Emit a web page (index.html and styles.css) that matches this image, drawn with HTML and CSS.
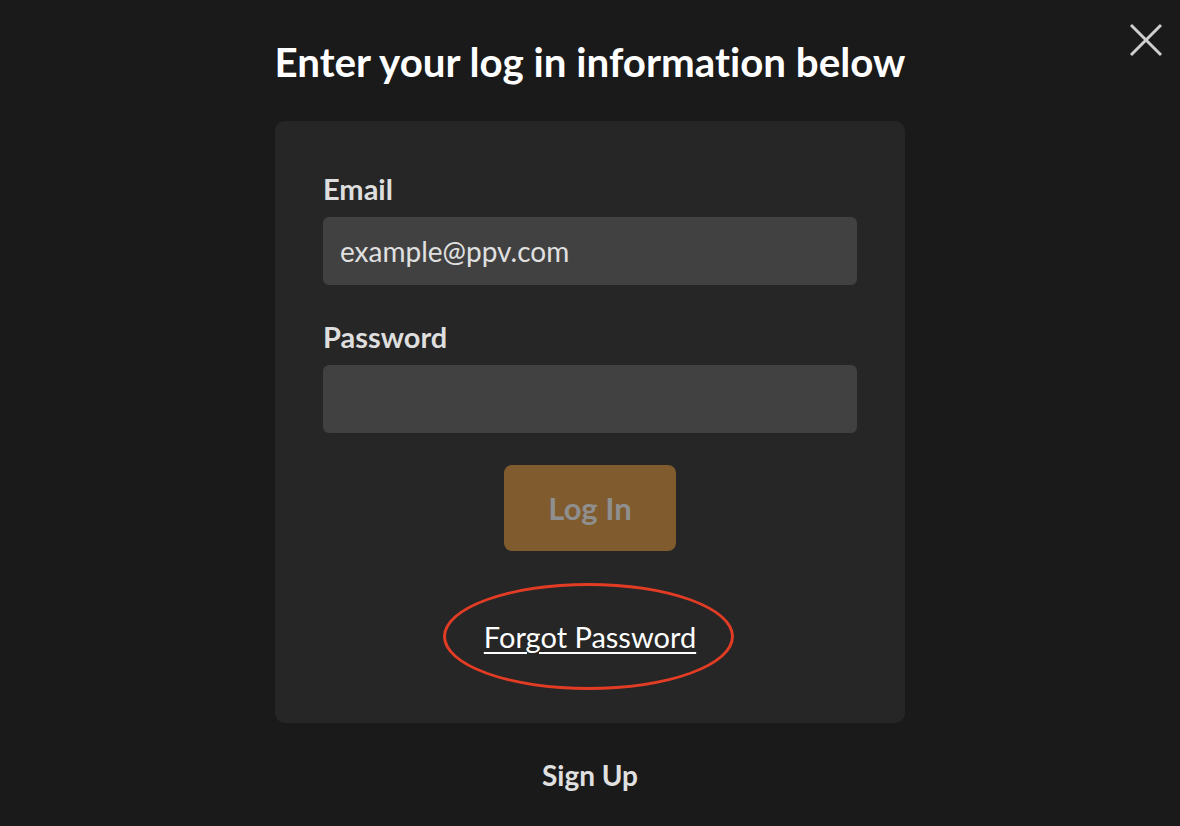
FILE: index.html
```html
<!DOCTYPE html>
<html lang="en">
<head>
  <meta charset="UTF-8" />
  <meta name="viewport" content="width=device-width, initial-scale=1.0"/>
  <title>Log In</title>
  <link rel="stylesheet" href="styles.css">
</head>
<body>

<button class="close" type="button" aria-label="Close">
  <svg width="36" height="36" viewBox="0 0 36 36">
    <path d="M3 3 L33 33 M33 3 L3 33" stroke="#cfcfcf" stroke-width="3" fill="none"/>
  </svg>
</button>

<main class="modal">
  <h2 class="title">Enter your log in information below</h2>

  <form class="card" id="loginForm">
    <label class="label" for="email">Email</label>
    <input class="field" type="email" id="email" placeholder="example@ppv.com" />

    <label class="label" for="password">Password</label>
    <input class="field" type="password" id="password" />

    <button class="login" type="submit">Log In</button>

    <div class="forgot-wrap">
      <a class="forgot" href="#">Forgot Password</a>
      <span class="circle"></span>
    </div>
  </form>

  <a class="signup" href="#">Sign Up</a>
</main>

</body>
</html>
```

FILE: styles.css
```css
body {
  margin: 0;
  background-color: #1a1a1a;
  font-family: Lato, "Open Sans", sans-serif;
  font-variant-ligatures: none;
  color: #fff;
  min-height: 826px;
}
.close {
  position: absolute;
  top: 22px;
  right: 16px;
  background: none;
  border: 0;
  padding: 0;
  width: 36px;
  height: 36px;
}
.modal {
  display: flex;
  flex-direction: column;
  align-items: center;
  padding-top: 38px;
}
.title {
  margin: 0 0 35px;
  font-size: 40.3px;
  line-height: 48px;
  font-weight: 700;
  color: #fff;
}
.card {
  width: 534px;
  padding: 50px 48px 68px;
  background: #262626;
  border-radius: 10px;
  display: flex;
  flex-direction: column;
  align-items: stretch;
}
.label {
  font-size: 29px;
  line-height: 36px;
  font-weight: 700;
  color: #dedede;
  margin-bottom: 10px;
}
.field {
  height: 68px;
  box-sizing: border-box;
  background: #414141;
  border: 0;
  border-radius: 6px;
  padding: 0 17px;
  font-family: inherit;
  font-size: 28px;
  color: #e0e0e0;
  margin-bottom: 34px;
}
.field::placeholder {
  color: #e0e0e0;
}
.field + .label + .field {
  margin-bottom: 32px;
}
.login {
  align-self: center;
  width: 172px;
  height: 86px;
  background: #805b2e;
  border: 0;
  border-radius: 8px;
  font-family: inherit;
  font-size: 31px;
  font-weight: 700;
  color: #8f8f8f;
}
.forgot-wrap {
  position: relative;
  align-self: center;
  margin-top: 68px;
}
.forgot {
  font-size: 29px;
  line-height: 36px;
  color: #fff;
  text-decoration: underline;
  text-underline-offset: 4px;
  text-decoration-thickness: 2px;
}
.circle {
  position: absolute;
  left: -41px;
  top: -36px;
  width: 285px;
  height: 101px;
  border: 3.5px solid #e23c25;
  border-radius: 50%;
}
.signup {
  margin-top: 34px;
  font-size: 28px;
  line-height: 36px;
  font-weight: 700;
  color: #e0e0e0;
  text-decoration: none;
}
```
